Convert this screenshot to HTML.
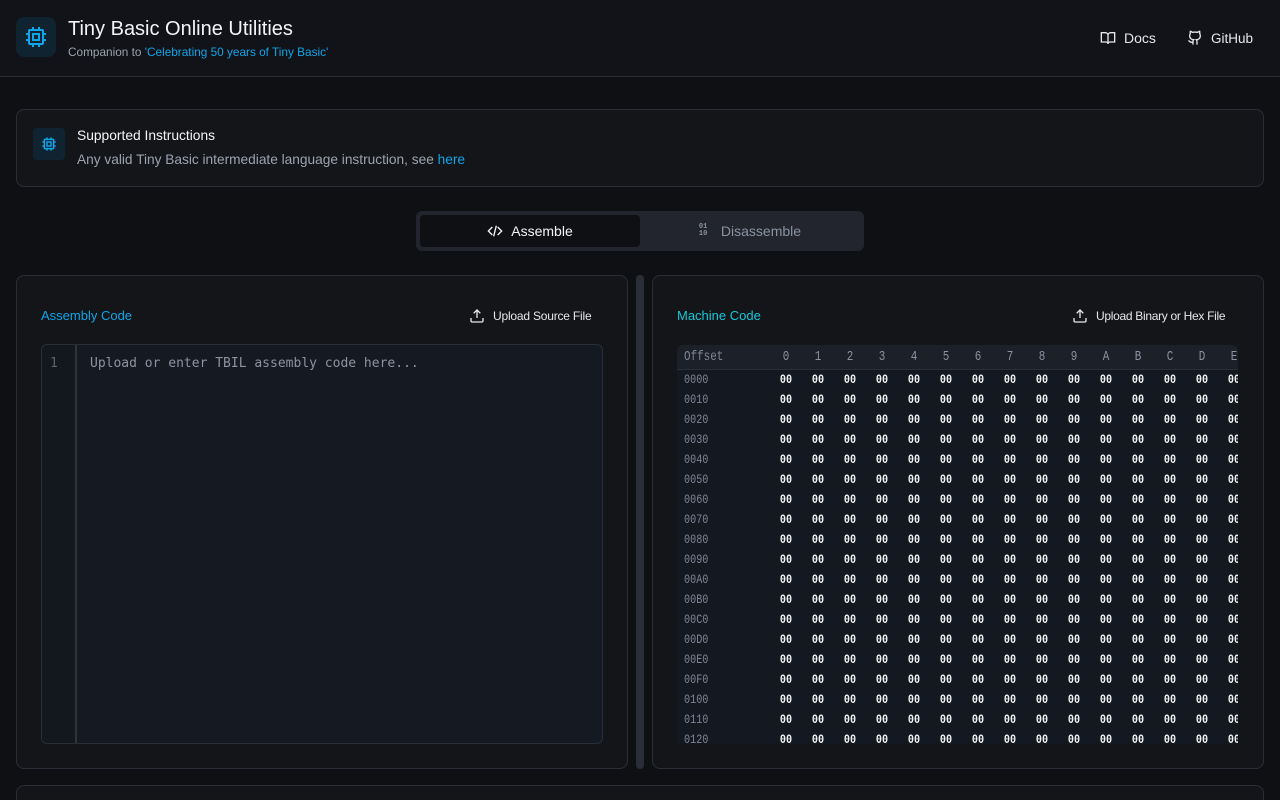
<!DOCTYPE html>
<html><head><meta charset="utf-8"><style>
*{box-sizing:border-box;margin:0;padding:0}
html,body{width:1280px;height:800px;overflow:hidden}
body{background:#0e1014;font-family:"Liberation Sans",sans-serif;color:#e5e7eb;position:relative}
.abs{position:absolute}
.hdr{left:0;top:0;width:1280px;height:77px;background:#111318;border-bottom:1px solid #2a2d35}
.logo{left:16px;top:17px;width:40px;height:40px;border-radius:8px;background:#0f2430;display:flex;align-items:center;justify-content:center}
.card{border:1px solid #2a2d35;border-radius:8px;background:#141519}
.mono{font-family:"Liberation Mono","DejaVu Sans Mono",monospace}
.tbl{left:677px;top:345px;width:561px;height:399px;background:#141820;border-radius:6px 6px 0 0;overflow:hidden}
.hr,.r{display:grid;grid-template-columns:93px repeat(16,32px);font-family:"Liberation Mono",monospace;font-size:13px;width:620px}
.hr{height:25px;line-height:24px;background:#1c2028;border-bottom:1px solid #2a2e37;color:#8b93a1;font-size:14px}
.r{height:20px;line-height:20px;color:#f3f4f6;font-weight:bold}
.hr span,.r span{text-align:center;display:inline-block;transform:scaleX(.78)}
.hr span:first-child,.r span:first-child{text-align:left;padding-left:9px;color:#7d8696;font-weight:normal;transform-origin:0 0}
</style></head><body>
<div class="abs hdr"></div>
<div class="abs logo"><svg width="24" height="24" viewBox="0 0 24 24" fill="none" stroke="#0ea5e9" stroke-width="2"><rect x="5" y="5" width="14" height="14" rx="1"/><rect x="9" y="9" width="6" height="6"/><path d="M9 2v3M15 2v3M9 19v3M15 19v3M2 9h3M2 15h3M19 9h3M19 15h3"/></svg></div>
<div class="abs" style="left:68px;top:18px;font-size:20px;color:#f3f4f6">Tiny Basic Online Utilities</div>
<div class="abs" style="left:68px;top:45px;font-size:11.8px;color:#9ca3af">Companion to <span style="color:#0ea5e9">'Celebrating 50 years of Tiny Basic'</span></div>
<div class="abs" style="left:1100px;top:30px;display:flex;align-items:center;font-size:14px;color:#e5e7eb"><svg width="16" height="16" viewBox="0 0 24 24" fill="none" stroke="#e5e7eb" stroke-width="2"><path d="M2 4h6a4 4 0 0 1 4 4v13a3 3 0 0 0-3-3H2zM22 4h-6a4 4 0 0 0-4 4v13a3 3 0 0 1 3-3h7z"/></svg><span style="margin-left:8px">Docs</span></div>
<div class="abs" style="left:1187px;top:30px;display:flex;align-items:center;font-size:13.5px;color:#e5e7eb"><svg width="16" height="16" viewBox="0 0 24 24" fill="none" stroke="#e5e7eb" stroke-width="2"><path d="M15 22v-4a4.8 4.8 0 0 0-1-3.5c3 0 6-2 6-5.5.08-1.25-.27-2.48-1-3.5.28-1.15.28-2.350 0-3.5 0 0-1 0-3 1.5-2.64-.5-5.36-.5-8 0C6 2 5 2 5 2c-.3 1.15-.3 2.35 0 3.5A5.4 5.4 0 0 0 4 9c0 3.5 3 5.5 6 5.5-.39.49-.68 1.05-.85 1.65S8.930 17.38 9 18v4M9 18c-4.51 2-5-2-7-2"/></svg><span style="margin-left:8px">GitHub</span></div>

<div class="abs card" style="left:16px;top:109px;width:1248px;height:78px"></div>
<div class="abs" style="left:33px;top:128px;width:32px;height:32px;border-radius:4px;background:#0f2430;display:flex;align-items:center;justify-content:center"><svg width="16" height="16" viewBox="0 0 24 24" fill="none" stroke="#0ea5e9" stroke-width="2.2"><rect x="5" y="5" width="14" height="14" rx="1"/><rect x="9" y="9" width="6" height="6"/><path d="M9 2v3M15 2v3M9 19v3M15 19v3M2 9h3M2 15h3M19 9h3M19 15h3"/></svg></div>
<div class="abs" style="left:77px;top:128px;font-size:13.8px;color:#f3f4f6">Supported Instructions</div>
<div class="abs" style="left:77px;top:152px;font-size:13.7px;color:#9ca3af">Any valid Tiny Basic intermediate language instruction, see <span style="color:#0ea5e9">here</span></div>

<div class="abs" style="left:416px;top:211px;width:448px;height:40px;background:#22252d;border-radius:6px"></div>
<div class="abs" style="left:420px;top:215px;width:220px;height:32px;background:#0e1014;border-radius:4px;display:flex;align-items:center;justify-content:center;font-size:14px;color:#f3f4f6"><svg width="16" height="16" viewBox="0 0 24 24" fill="none" stroke="#f3f4f6" stroke-width="2"><path d="M8 6l-6 6 6 6M16 6l6 6-6 6M14 4l-4 16"/></svg><span style="margin-left:8px">Assemble</span></div>
<div class="abs" style="left:640px;top:215px;width:220px;height:32px;display:flex;align-items:center;justify-content:center;font-size:14px;color:#8b93a1"><span class="mono" style="font-size:7px;line-height:7px;font-weight:bold;width:12px">01<br>10</span><span style="margin-left:10px">Disassemble</span></div>

<div class="abs card" style="left:16px;top:275px;width:612px;height:494px;background:#131519"></div>
<div class="abs" style="left:636px;top:275px;width:8px;height:494px;background:#2a2e36;border-radius:4px"></div>
<div class="abs card" style="left:652px;top:275px;width:612px;height:494px;background:#131519"></div>

<div class="abs" style="left:41px;top:308px;font-size:13px;color:#0ea5e9">Assembly Code</div>
<div class="abs" style="left:469px;top:308px;display:flex;align-items:center;font-size:12px;color:#e5e7eb"><svg width="16" height="16" viewBox="0 0 24 24" fill="none" stroke="#e5e7eb" stroke-width="2"><path d="M21 15v4a2 2 0 0 1-2 2H5a2 2 0 0 1-2-2v-4M17 8l-5-5-5 5M12 3v12"/></svg><span style="margin-left:8px;letter-spacing:-0.2px">Upload Source File</span></div>
<div class="abs" style="left:41px;top:344px;width:562px;height:400px;background:#151a22;border:1px solid #2a2e37;border-radius:6px;overflow:hidden">
 <div class="abs" style="left:0;top:0;width:35px;height:400px;background:#13171e;border-right:2px solid #2e333c"></div>
 <div class="abs" style="left:8px;top:11px;font-family:'DejaVu Sans Mono',monospace;font-size:13px;color:#5b6270">1</div>
 <div class="abs" style="left:48px;top:11px;font-family:'DejaVu Sans Mono',monospace;font-size:13px;color:#8b93a1">Upload or enter TBIL assembly code here...</div>
</div>

<div class="abs" style="left:677px;top:308px;font-size:13px;color:#14c8d8">Machine Code</div>
<div class="abs" style="left:1072px;top:308px;display:flex;align-items:center;font-size:12px;color:#e5e7eb"><svg width="16" height="16" viewBox="0 0 24 24" fill="none" stroke="#e5e7eb" stroke-width="2"><path d="M21 15v4a2 2 0 0 1-2 2H5a2 2 0 0 1-2-2v-4M17 8l-5-5-5 5M12 3v12"/></svg><span style="margin-left:8px;letter-spacing:-0.3px">Upload Binary or Hex File</span></div>
<div class="abs tbl">
<div class="hr"><span>Offset</span><span>0</span><span>1</span><span>2</span><span>3</span><span>4</span><span>5</span><span>6</span><span>7</span><span>8</span><span>9</span><span>A</span><span>B</span><span>C</span><span>D</span><span>E</span><span>F</span></div>
<div class="r"><span>0000</span><span>00</span><span>00</span><span>00</span><span>00</span><span>00</span><span>00</span><span>00</span><span>00</span><span>00</span><span>00</span><span>00</span><span>00</span><span>00</span><span>00</span><span>00</span><span>00</span></div>
<div class="r"><span>0010</span><span>00</span><span>00</span><span>00</span><span>00</span><span>00</span><span>00</span><span>00</span><span>00</span><span>00</span><span>00</span><span>00</span><span>00</span><span>00</span><span>00</span><span>00</span><span>00</span></div>
<div class="r"><span>0020</span><span>00</span><span>00</span><span>00</span><span>00</span><span>00</span><span>00</span><span>00</span><span>00</span><span>00</span><span>00</span><span>00</span><span>00</span><span>00</span><span>00</span><span>00</span><span>00</span></div>
<div class="r"><span>0030</span><span>00</span><span>00</span><span>00</span><span>00</span><span>00</span><span>00</span><span>00</span><span>00</span><span>00</span><span>00</span><span>00</span><span>00</span><span>00</span><span>00</span><span>00</span><span>00</span></div>
<div class="r"><span>0040</span><span>00</span><span>00</span><span>00</span><span>00</span><span>00</span><span>00</span><span>00</span><span>00</span><span>00</span><span>00</span><span>00</span><span>00</span><span>00</span><span>00</span><span>00</span><span>00</span></div>
<div class="r"><span>0050</span><span>00</span><span>00</span><span>00</span><span>00</span><span>00</span><span>00</span><span>00</span><span>00</span><span>00</span><span>00</span><span>00</span><span>00</span><span>00</span><span>00</span><span>00</span><span>00</span></div>
<div class="r"><span>0060</span><span>00</span><span>00</span><span>00</span><span>00</span><span>00</span><span>00</span><span>00</span><span>00</span><span>00</span><span>00</span><span>00</span><span>00</span><span>00</span><span>00</span><span>00</span><span>00</span></div>
<div class="r"><span>0070</span><span>00</span><span>00</span><span>00</span><span>00</span><span>00</span><span>00</span><span>00</span><span>00</span><span>00</span><span>00</span><span>00</span><span>00</span><span>00</span><span>00</span><span>00</span><span>00</span></div>
<div class="r"><span>0080</span><span>00</span><span>00</span><span>00</span><span>00</span><span>00</span><span>00</span><span>00</span><span>00</span><span>00</span><span>00</span><span>00</span><span>00</span><span>00</span><span>00</span><span>00</span><span>00</span></div>
<div class="r"><span>0090</span><span>00</span><span>00</span><span>00</span><span>00</span><span>00</span><span>00</span><span>00</span><span>00</span><span>00</span><span>00</span><span>00</span><span>00</span><span>00</span><span>00</span><span>00</span><span>00</span></div>
<div class="r"><span>00A0</span><span>00</span><span>00</span><span>00</span><span>00</span><span>00</span><span>00</span><span>00</span><span>00</span><span>00</span><span>00</span><span>00</span><span>00</span><span>00</span><span>00</span><span>00</span><span>00</span></div>
<div class="r"><span>00B0</span><span>00</span><span>00</span><span>00</span><span>00</span><span>00</span><span>00</span><span>00</span><span>00</span><span>00</span><span>00</span><span>00</span><span>00</span><span>00</span><span>00</span><span>00</span><span>00</span></div>
<div class="r"><span>00C0</span><span>00</span><span>00</span><span>00</span><span>00</span><span>00</span><span>00</span><span>00</span><span>00</span><span>00</span><span>00</span><span>00</span><span>00</span><span>00</span><span>00</span><span>00</span><span>00</span></div>
<div class="r"><span>00D0</span><span>00</span><span>00</span><span>00</span><span>00</span><span>00</span><span>00</span><span>00</span><span>00</span><span>00</span><span>00</span><span>00</span><span>00</span><span>00</span><span>00</span><span>00</span><span>00</span></div>
<div class="r"><span>00E0</span><span>00</span><span>00</span><span>00</span><span>00</span><span>00</span><span>00</span><span>00</span><span>00</span><span>00</span><span>00</span><span>00</span><span>00</span><span>00</span><span>00</span><span>00</span><span>00</span></div>
<div class="r"><span>00F0</span><span>00</span><span>00</span><span>00</span><span>00</span><span>00</span><span>00</span><span>00</span><span>00</span><span>00</span><span>00</span><span>00</span><span>00</span><span>00</span><span>00</span><span>00</span><span>00</span></div>
<div class="r"><span>0100</span><span>00</span><span>00</span><span>00</span><span>00</span><span>00</span><span>00</span><span>00</span><span>00</span><span>00</span><span>00</span><span>00</span><span>00</span><span>00</span><span>00</span><span>00</span><span>00</span></div>
<div class="r"><span>0110</span><span>00</span><span>00</span><span>00</span><span>00</span><span>00</span><span>00</span><span>00</span><span>00</span><span>00</span><span>00</span><span>00</span><span>00</span><span>00</span><span>00</span><span>00</span><span>00</span></div>
<div class="r"><span>0120</span><span>00</span><span>00</span><span>00</span><span>00</span><span>00</span><span>00</span><span>00</span><span>00</span><span>00</span><span>00</span><span>00</span><span>00</span><span>00</span><span>00</span><span>00</span><span>00</span></div>
</div>

<div class="abs card" style="left:16px;top:785px;width:1248px;height:15px;border-bottom:none;border-radius:8px 8px 0 0"></div>
</body></html>
